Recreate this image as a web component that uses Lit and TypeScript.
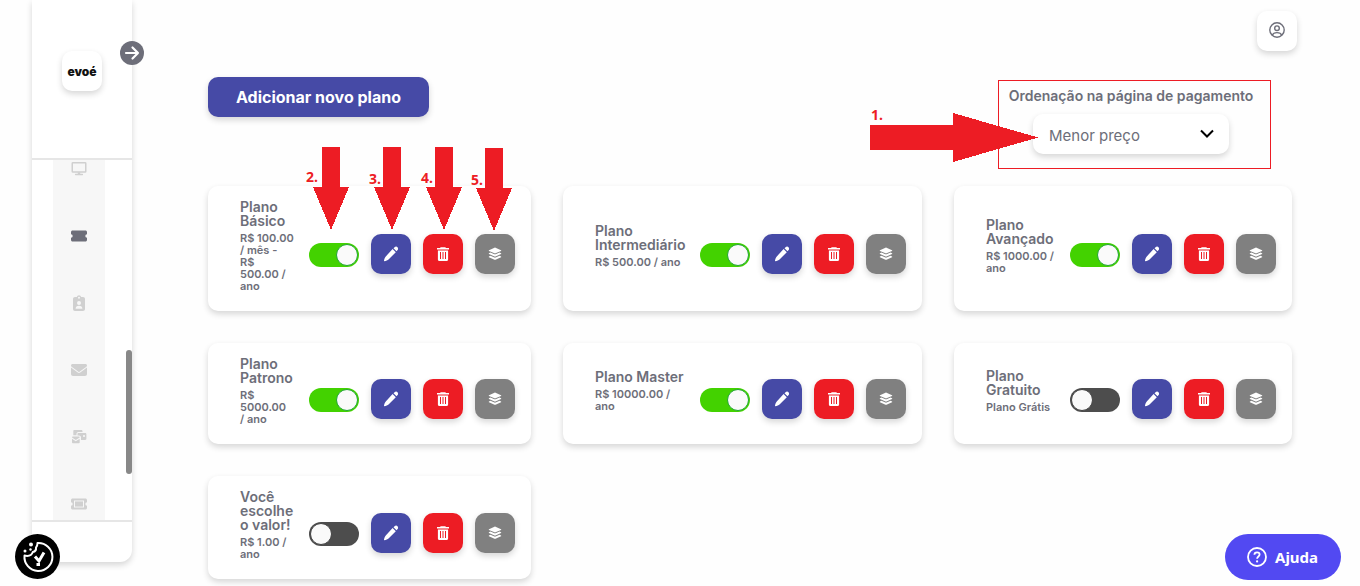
import { LitElement, html, css, svg, nothing } from "lit";
import { customElement, property } from "lit/decorators.js";

interface Plan {
  id: string;
  name: string;
  price: string;
  active: boolean;
}

const PLANS: Plan[] = [
  { id: "basico", name: "Plano\nBásico", price: "R$ 100.00\n/ mês -\nR$\n500.00 /\nano", active: true },
  { id: "intermediario", name: "Plano\nIntermediário", price: "R$ 500.00 / ano", active: true },
  { id: "avancado", name: "Plano\nAvançado", price: "R$ 1000.00 /\nano", active: true },
  { id: "patrono", name: "Plano\nPatrono", price: "R$\n5000.00\n/ ano", active: true },
  { id: "master", name: "Plano Master", price: "R$ 10000.00 /\nano", active: true },
  { id: "gratuito", name: "Plano\nGratuito", price: "Plano Grátis", active: false },
  { id: "livre", name: "Você\nescolhe\no valor!", price: "R$ 1.00 /\nano", active: false },
];

const pencil = html`<svg width="16" height="16" viewBox="0 0 16 16" fill="#fff" aria-hidden="true">
  <path d="M9.600 3 12.800 6.200 5.800 13.200C4.600 14.300 3 14.900 1.500 15.200c-.4 0-.6-.2-.5-.6C1.300 13 1.800 11.400 3 10.200Z"/>
  <path d="M10.500 2.200 11.600 1.200c.9-.8 2.100-.8 2.900 0 .8.800.8 2 .1 2.800l-1.100 1.300Z"/>
</svg>`;

const trash = html`<svg width="14" height="16" viewBox="0 0 14 16" aria-hidden="true">
  <path fill="#fff" d="M4.600 1.200h4.800l.5.900H13v1.400H1V2.100h3.100ZM1.900 4.400h10.200v9.100c0 .9-.6 1.500-1.500 1.500H3.400c-.9 0-1.500-.6-1.500-1.500Z"/>
  <path stroke="#ed1c24" d="M4.500 6v7M7 6v7M9.500 6v7" fill="none"/>
</svg>`;

const layers = html`<svg width="14" height="14" viewBox="0 0 14 14" fill="#fff" aria-hidden="true">
  <path d="M7 .6 13 3.300c.4.200.4.600 0 .8L7.500 6.300a1.300 1.300 0 0 1-1 0L1 4.100c-.4-.2-.4-.6 0-.8Z"/>
  <path d="m1 6.200 1.400-.6 4 1.600c.4.200.8.200 1.200 0l4-1.600 1.400.6c.4.200.4.600 0 .8L7.500 9.500a1.300 1.300 0 0 1-1 0L1 7c-.4-.2-.4-.6 0-.8Z"/>
  <path d="m1 9.400 1.400-.6 4 1.700c.4.200.8.200 1.200 0l4-1.700 1.400.6c.4.200.4.600 0 .8l-5.500 2.500a1.300 1.300 0 0 1-1 0L1 10.200c-.4-.2-.4-.6 0-.8Z"/>
</svg>`;

const NAV = [
  {
    label: "Painel",
    icon: svg`<path fill="none" stroke="currentColor" stroke-width="1.500" d="M1.750 1.800h12.500q.5 0 .5.500v8.200q0 .5-.5.500H1.750q-.5 0-.5-.5V2.300q0-.5.5-.5Z"/><path fill="currentColor" d="M6.800 11.300h2.400v1.500h2.200q.7 0 .7.800t-.7.700H4.600q-.7 0-.7-.7t.7-.8h2.200Z"/>`,
  },
  {
    label: "Planos",
    icon: svg`<path fill="currentColor" d="M1.600 2.500h12.800c.9 0 1.600.7 1.600 1.500v2.300a1.700 1.700 0 0 0 0 3.400V12c0 .8-.7 1.500-1.600 1.500H1.600C.7 13.500 0 12.800 0 12V9.700a1.700 1.700 0 0 0 0-3.400V4c0-.8.7-1.500 1.600-1.500Z"/>`,
  },
  {
    label: "Apoiadores",
    icon: svg`<path fill="currentColor" fill-rule="evenodd" d="M4 2h1.800a2.300 2.300 0 0 1 4.400 0H12c1.200 0 2 .8 2 2v10c0 1.200-.8 2-2 2H4c-1.200 0-2-.8-2-2V4c0-1.200.8-2 2-2Zm4-.2a1 1 0 1 0 0 2 1 1 0 0 0 0-2ZM8 6a2 2 0 1 0 0 4 2 2 0 0 0 0-4Zm-3.400 7.700h6.800c0-1.900-1.200-2.900-3.400-2.900s-3.400 1-3.400 2.900Z"/>`,
  },
  {
    label: "Mensagens",
    icon: svg`<path fill="currentColor" d="M1.500 2h13c.8 0 1.500.6 1.500 1.500 0 .5-.2.900-.6 1.200L8.600 9.800c-.4.300-.8.300-1.200 0L.6 4.700C.2 4.400 0 4 0 3.500 0 2.600.7 2 1.500 2ZM0 5.500l6.800 5.100c.7.500 1.700.5 2.400 0L16 5.500V12c0 1.100-.9 2-2 2H2c-1.100 0-2-.9-2-2Z"/>`,
  },
  {
    label: "Correio",
    icon: svg`<path fill="currentColor" fill-rule="evenodd" d="M3.300 1h7c.7 0 1.200.5 1.200 1.200V3H7.500C6.300 3 5.500 3.800 5.500 5v1.200H2.300v-4C2.300 1.500 2.700 1 3.300 1ZM7.500 4h6.700c.7 0 1.200.5 1.200 1.200v4.600c0 .7-.5 1.200-1.200 1.200H10V8.500c0-1.100-.8-2-2-2H6.500V5c0-.6.400-1 1-1Zm4.700 2v2h1.600V6ZM1.700 7.500h6c.6 0 1 .4 1 .9L4.800 11 1 8.500c0-.6.3-1 .7-1ZM1 9.700l3.800 2.500L8.700 9.700v3.600c0 .6-.4 1-1 1h-6c-.4 0-.7-.4-.7-1Z"/>`,
  },
  {
    label: "Cupons",
    icon: svg`<path fill="currentColor" fill-rule="evenodd" d="M1.600 2.500h12.800c.9 0 1.600.7 1.600 1.500v2.300a1.700 1.700 0 0 0 0 3.400V12c0 .8-.7 1.500-1.600 1.500H1.600C.7 13.500 0 12.800 0 12V9.700a1.700 1.700 0 0 0 0-3.400V4c0-.8.7-1.500 1.600-1.500ZM3 4.500v7h10v-7Z"/><path fill="currentColor" d="M4 5.400h8v5.200H4Z"/>`,
  },
];

@customElement("plan-card")
class PlanCard extends LitElement {
  @property({ attribute: false }) plan!: Plan;

  static styles = css`
    :host {
      display: flex;
      align-items: center;
      box-sizing: border-box;
      padding: 14px 16px 14px 32px;
      border-radius: 10px;
      background: #fff;
      box-shadow: 0 3px 6px rgba(0, 0, 0, 0.16);
      color: #6d6e79;
      font-family: Inter, "Open Sans", sans-serif;
      font-weight: 600;
    }
    .info {
      flex: 1;
      min-width: 0;
      margin-right: 12px;
      padding-bottom: 5px;
    }
    .name {
      margin: 0 0 4px;
      font-size: 14px;
      line-height: 14px;
      font-weight: 600;
      white-space: pre;
    }
    .price {
      margin: 0;
      font-size: 11px;
      line-height: 12px;
      white-space: pre;
    }
    .actions {
      display: flex;
      align-items: center;
      gap: 12px;
      padding-top: 11px;
    }
    .toggle {
      appearance: none;
      display: flex;
      align-items: center;
      box-sizing: border-box;
      width: 50px;
      height: 24px;
      margin: 2px 0 0;
      padding: 0 1px;
      border-radius: 12px;
      background: #4d4d4d;
      cursor: pointer;
    }
    .toggle::before {
      content: "";
      width: 20px;
      height: 20px;
      border: 1px solid #444;
      border-radius: 50%;
      background: #fafafa;
    }
    .toggle:checked {
      justify-content: flex-end;
      background: #43d200;
    }
    .toggle:checked::before {
      border-color: #22a535;
    }
    .action {
      display: flex;
      align-items: center;
      justify-content: center;
      width: 40px;
      height: 40px;
      padding: 0;
      border: 0;
      border-radius: 10px;
      box-shadow: 0 3px 6px rgba(0, 0, 0, 0.16);
      cursor: pointer;
    }
    .edit { background: #464aa6; }
    .remove { background: #ed1c24; }
    .stack { background: #808080; }
  `;

  render() {
    const { id, name, price, active } = this.plan;
    const title = name.replace(/\n/g, " ");
    return html`
      <div class="info">
        <h2 class="name" id=${id}>${name}</h2>
        <p class="price">${price}</p>
      </div>
      <div class="actions">
        <input class="toggle" type="checkbox" role="switch" aria-labelledby=${id} .checked=${active} />
        <button class="action edit" aria-label="Editar ${title}">${pencil}</button>
        <button class="action remove" aria-label="Excluir ${title}">${trash}</button>
        <button class="action stack" aria-label="Detalhes ${title}">${layers}</button>
      </div>
    `;
  }
}

@customElement("app-root")
class AppRoot extends LitElement {
  static styles = css`
    :host {
      display: block;
      min-height: 100vh;
      box-sizing: border-box;
      background: #fefefe;
      color: #6d6e79;
      font-family: Inter, "Open Sans", sans-serif;
    }
    .page {
      display: flex;
      align-items: flex-start;
      padding-left: 32px;
    }
    .sidebar {
      position: relative;
      flex: none;
      display: flex;
      flex-direction: column;
      width: 100px;
      height: calc(100vh - 24px);
      border-radius: 0 0 12px 12px;
      background: #fff;
      box-shadow: 0 3px 6px rgba(0, 0, 0, 0.16);
    }
    .brand {
      display: flex;
      justify-content: center;
      align-items: center;
      box-sizing: border-box;
      height: 160px;
      padding-bottom: 16px;
      border-bottom: 2px solid #e6e6e6;
    }
    .logo {
      display: flex;
      align-items: center;
      justify-content: center;
      width: 40px;
      height: 40px;
      border-radius: 10px;
      background: #fff;
      box-shadow: 0 3px 6px rgba(0, 0, 0, 0.16);
      color: #111;
      font-size: 12px;
      font-weight: 900;
      text-decoration: none;
    }
    .expand {
      position: absolute;
      top: 41px;
      right: -12px;
      display: flex;
      width: 24px;
      height: 24px;
      padding: 0;
      border: 0;
      border-radius: 50%;
      background: #6d6e79;
      cursor: pointer;
    }
    .menu {
      position: relative;
      flex: 1;
      min-height: 0;
      overflow: hidden;
      padding-left: 21px;
    }
    .links {
      width: 52px;
      margin-top: -25px;
      background: #f7f7f7;
    }
    .link {
      display: flex;
      align-items: center;
      justify-content: center;
      height: 67px;
      color: #d0d0d0;
    }
    .link.current {
      color: #6d6e79;
    }
    .thumb {
      position: absolute;
      right: 0;
      bottom: 46px;
      width: 6px;
      height: 124px;
      border-radius: 3px;
      background: #888;
    }
    .foot {
      height: 40px;
      border-top: 2px solid #e6e6e6;
    }
    .main {
      flex: 1;
      min-width: 0;
      padding: 11px 68px 7px 76px;
    }
    .top {
      display: flex;
      justify-content: flex-end;
      margin-right: -5px;
    }
    .account {
      display: flex;
      align-items: center;
      justify-content: center;
      width: 40px;
      height: 40px;
      padding: 0 0 2px;
      border: 0;
      border-radius: 10px;
      background: #fff;
      box-shadow: 0 3px 6px rgba(0, 0, 0, 0.16);
      color: #6d6e79;
      cursor: pointer;
    }
    .toolbar {
      display: flex;
      align-items: flex-start;
      justify-content: space-between;
      padding-top: 26px;
    }
    .add {
      height: 40px;
      padding: 0 28px;
      border: 0;
      border-radius: 10px;
      background: #464aa6;
      box-shadow: 0 3px 6px rgba(0, 0, 0, 0.16);
      color: #fff;
      font-family: inherit;
      font-size: 16px;
      font-weight: 700;
      cursor: pointer;
    }
    .order {
      position: relative;
      display: flex;
      flex-direction: column;
      align-items: center;
      gap: 9px;
      box-sizing: border-box;
      width: 273px;
      height: 89px;
      margin: 3px 21px 17px 0;
      padding-right: 7px;
      padding-top: 5px;
      border: 1px solid #ed1c24;
    }
    .order label {
      font-size: 14px;
      line-height: 19px;
      font-weight: 600;
      white-space: nowrap;
    }
    .picker {
      display: grid;
      align-items: center;
      width: 196px;
    }
    .picker > * {
      grid-area: 1 / 1;
    }
    .picker select {
      appearance: none;
      width: 100%;
      height: 40px;
      padding: 2px 40px 0 16px;
      border: 0;
      border-radius: 10px;
      background: #fff;
      box-shadow: 0 3px 6px rgba(0, 0, 0, 0.16);
      color: #6d6e79;
      font-family: inherit;
      font-size: 15px;
      font-weight: 400;
    }
    .picker svg {
      justify-self: end;
      margin-right: 15px;
      pointer-events: none;
    }
    .grid {
      position: relative;
      display: grid;
      grid-template-columns: 323fr 359fr 338fr;
      gap: 32px;
    }
    .marks {
      position: absolute;
      overflow: visible;
      pointer-events: none;
      fill: #ed1c24;
      font-family: "Open Sans", "Noto Sans", sans-serif;
      font-size: 14px;
      font-weight: 700;
    }
    .marks-order {
      top: 32px;
      left: -129px;
    }
    .marks-card {
      top: -39px;
      left: 96px;
    }
    .cookie {
      position: fixed;
      left: 15px;
      bottom: 7px;
      display: flex;
      width: 45px;
      height: 45px;
      padding: 0;
      border: 0;
      border-radius: 50%;
      background: #000;
      cursor: pointer;
    }
    .help {
      position: fixed;
      right: 19px;
      bottom: 6px;
      display: flex;
      align-items: center;
      gap: 8px;
      min-width: 116px;
      height: 46px;
      padding: 0 22px;
      border: 0;
      border-radius: 23px;
      background: #5249f2;
      color: #fff;
      font-family: "Noto Sans", "Open Sans", sans-serif;
      font-size: 15px;
      font-weight: 700;
      cursor: pointer;
    }
  `;

  render() {
    return html`
      <div class="page">
        <aside class="sidebar">
          <div class="brand"><a class="logo" href="#">evoé</a></div>
          <button class="expand" aria-label="Expandir menu">
            <svg width="24" height="24" viewBox="0 0 24 24" fill="none" stroke="#fff" stroke-width="2.200" stroke-linecap="round" stroke-linejoin="round">
              <path d="M6 12h12M12.500 6.500 18 12l-5.500 5.500" />
            </svg>
          </button>
          <nav class="menu">
            <div class="links">
              ${NAV.map(
                (n, i) => html`<a class="link ${i === 1 ? "current" : ""}" href="#" aria-label=${n.label} aria-current=${i === 1 ? "page" : nothing}>
                  <svg width="16" height="16" viewBox="0 0 16 16">${n.icon}</svg>
                </a>`
              )}
            </div>
            <div class="thumb"></div>
          </nav>
          <div class="foot"></div>
        </aside>

        <main class="main">
          <div class="top">
            <button class="account" aria-label="Minha conta">
              <svg width="16" height="16" viewBox="0 0 16 16" fill="none" stroke="currentColor" stroke-width="1.400">
                <circle cx="8" cy="8" r="7.200" />
                <circle cx="8" cy="6.200" r="2.300" />
                <path d="M3.200 13.200c.8-1.900 2.500-2.600 4.800-2.600s4 .7 4.800 2.600" />
              </svg>
            </button>
          </div>

          <div class="toolbar">
            <button class="add">Adicionar novo plano</button>
            <div class="order">
              <label for="order">Ordenação na página de pagamento</label>
              <div class="picker">
                <select id="order">
                  <option>Menor preço</option>
                  <option>Maior preço</option>
                </select>
                <svg width="14" height="10" viewBox="0 0 14 10" fill="none" stroke="#000" stroke-width="2">
                  <path d="M1 1.500 7 7.500l6-6" />
                </svg>
              </div>
              <svg class="marks marks-order" width="168" height="49" viewBox="0 0 168 49" shape-rendering="crispEdges">
                <path d="M0 12h83V0l85 24.500L83 49V37H0Z" />
                <text x="1" y="7">1.</text>
              </svg>
            </div>
          </div>

          <section class="grid">
            ${PLANS.map((p) => html`<plan-card .plan=${p}></plan-card>`)}
            <svg class="marks marks-card" width="210" height="84" viewBox="0 0 210 84" shape-rendering="crispEdges">
              ${[18, 79, 131].map((x) => svg`<path d="M${x} 0h18v40h9l-18 43-18-43h9Z" />`)}
              <path d="M181 1h18v40h9l-18 43-18-43h9Z" />
              <text x="2" y="35">2.</text>
              <text x="65" y="37">3.</text>
              <text x="117" y="36">4.</text>
              <text x="167" y="38">5.</text>
            </svg>
          </section>
        </main>
      </div>

      <button class="cookie" aria-label="Preferências de cookies">
        <svg width="45" height="45" viewBox="0 0 45 45" fill="none" stroke="#fff" stroke-width="2">
          <path d="M22.500 9c0 2-.4 3.500-1.500 4.500.3 2.500-.8 4-3.200 4.500-1 3-3.500 4.600-8.300 3.600A14 14 0 1 0 22.500 9Z" stroke-linejoin="round" />
          <path d="m20 22.500 4 4.500 5-8.500" stroke-width="3" />
          <path d="M21.500 30.500h3.500" stroke-width="3" />
          <g fill="#fff" stroke="none">
            <circle cx="16" cy="10.500" r="2" />
            <circle cx="10" cy="17" r="1.500" />
            <circle cx="15.500" cy="15.500" r="1.200" />
          </g>
        </svg>
      </button>

      <button class="help">
        <svg width="20" height="20" viewBox="0 0 20 20" fill="none" stroke="#fff" stroke-width="1.800">
          <circle cx="10" cy="10" r="9" />
          <path d="M7.400 7.800c0-1.500 1.100-2.500 2.600-2.500s2.600 1 2.600 2.300c0 1.900-2.500 2-2.500 4.200" />
          <circle cx="10.100" cy="14.400" r="1.100" fill="#fff" stroke="none" />
        </svg>
        Ajuda
      </button>
    `;
  }
}
